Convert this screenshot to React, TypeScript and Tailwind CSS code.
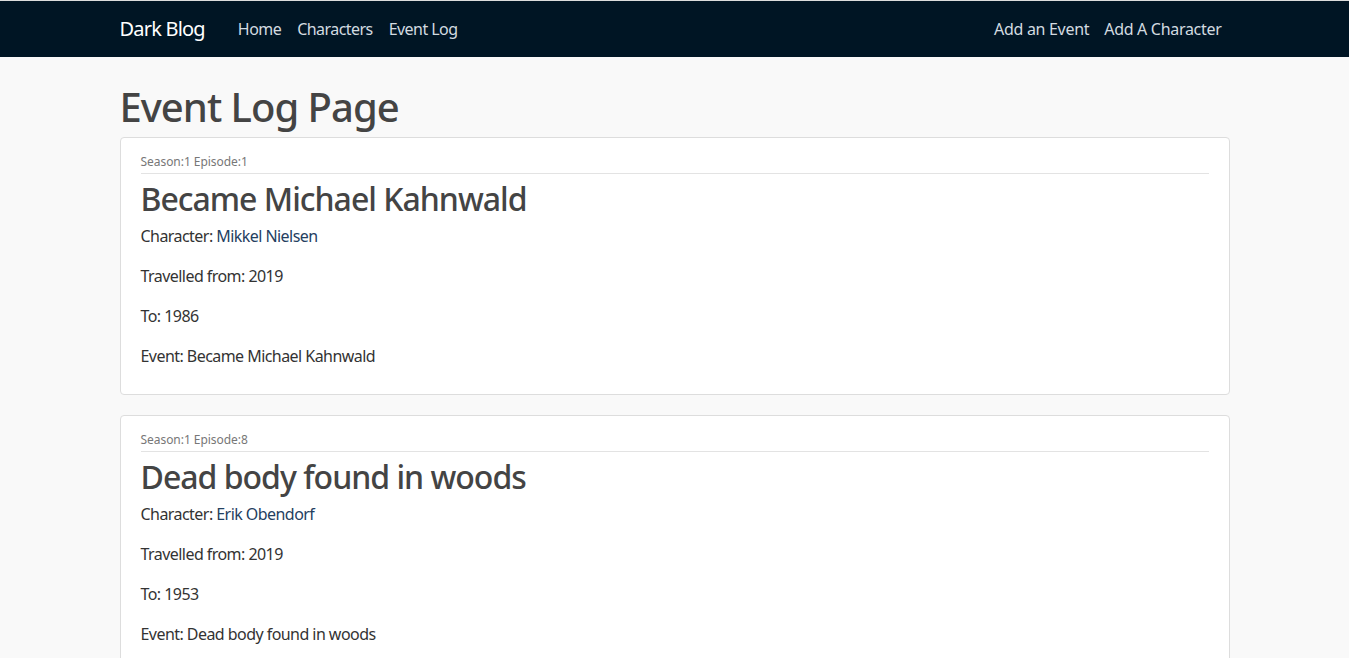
import React from "react";

const events = [
  {
    season: 1,
    episode: 1,
    title: "Became Michael Kahnwald",
    character: "Mikkel Nielsen",
    from: "2019",
    to: "1986",
  },
  {
    season: 1,
    episode: 8,
    title: "Dead body found in woods",
    character: "Erik Obendorf",
    from: "2019",
    to: "1953",
  },
];

export default function App() {
  return (
    <div
      className="min-h-screen bg-[#f9f9f9] border-t border-[#dcdcdc] text-[#444]"
      style={{ fontFamily: '"Noto Sans", "Open Sans", sans-serif' }}
    >
      <nav className="bg-[#001524] h-[56px]">
        <div className="w-[1140px] mx-auto px-[15px] h-full flex items-center">
          <span className="text-white text-[20px] tracking-[-0.8px] mr-[33px]">Dark Blog</span>
          <div className="flex gap-[16px] text-[16px] tracking-[-0.55px] text-[#d3dbe0]">
            <span>Home</span>
            <span>Characters</span>
            <span>Event Log</span>
          </div>
          <div className="ml-auto flex gap-[15px] text-[16px] tracking-[-0.3px] text-[#d3dbe0] pr-[8px]">
            <span>Add an Event</span>
            <span>Add A Character</span>
          </div>
        </div>
      </nav>
      <main className="w-[1140px] mx-auto px-[15px]">
        <h1 className="text-[40px] leading-[48px] font-medium tracking-[-1px] text-[#444] mt-[26px] mb-[6px]">
          Event Log Page
        </h1>
        <div className="flex flex-col gap-[20px]">
          {events.map((e) => (
            <div
              key={e.title}
              className="bg-white border border-[#dddddd] rounded-[4px] px-[20px] pt-[15px] pb-[10px]"
            >
              <div className="text-[12px] leading-[18px] tracking-[-0.05px] text-[#777] border-b border-[#e3e3e3] pb-[2px]">
                Season:{e.season} Episode:{e.episode}
              </div>
              <h2 className="text-[32px] leading-[38px] font-medium tracking-[-1px] text-[#444] mt-[6px] mb-[6px]">
                {e.title}
              </h2>
              <div className="text-[16px] leading-[24px] tracking-[-0.55px] text-[#333]">
                <p className="mb-[16px]">
                  Character: <span className="text-[#24405f]">{e.character}</span>
                </p>
                <p className="mb-[16px]">Travelled from: {e.from}</p>
                <p className="mb-[16px]">To: {e.to}</p>
                <p className="mb-[16px]">Event: {e.title}</p>
              </div>
            </div>
          ))}
        </div>
      </main>
    </div>
  );
}
